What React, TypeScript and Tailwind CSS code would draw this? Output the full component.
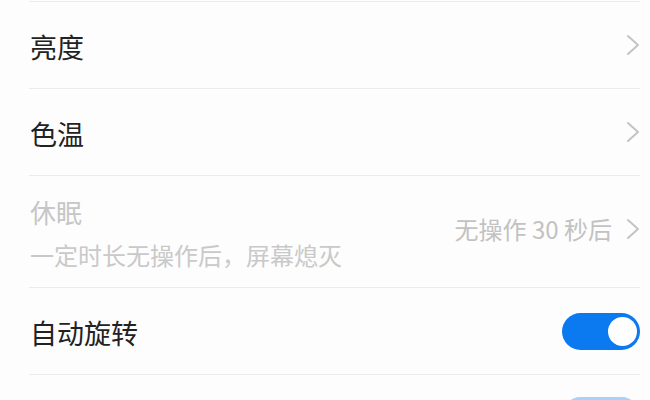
const FONT = { fontFamily: '"Noto Sans CJK SC", "Noto Sans", sans-serif' };

function Chevron() {
  return (
    <svg width="14" height="22" viewBox="0 0 14 22" fill="none" className="shrink-0">
      <polyline points="2,2 12,11 2,20" stroke="#c4c4c4" strokeWidth="2" strokeLinecap="round" strokeLinejoin="round" />
    </svg>
  );
}

function Toggle({ light }: { light?: boolean }) {
  return (
    <div className={`relative w-[78px] h-[37px] rounded-full shrink-0 ${light ? 'bg-[#a9d2fb]' : 'bg-[#0b7af1]'}`}>
      <div className="absolute right-[3px] top-[4px] w-[29px] h-[29px] rounded-full bg-white" />
    </div>
  );
}

function NavRow({ label }: { label: string }) {
  return (
    <div className="h-[87px] ml-[29px] mr-[10px] pl-px flex items-center justify-between border-b border-[#ebebeb]">
      <span className="text-[27px] leading-none text-[#222222] mt-[3px]">{label}</span>
      <Chevron />
    </div>
  );
}

export default function App() {
  return (
    <div className="w-[650px] h-[400px] overflow-hidden bg-[#fdfdfd]" style={FONT}>
      <div className="h-px mt-px ml-[29px] mr-[10px] bg-[#ebebeb]" />
      <NavRow label="亮度" />
      <NavRow label="色温" />

      <div className="h-[112px] ml-[29px] mr-[10px] pl-px flex items-center justify-between border-b border-[#ebebeb]">
        <div className="flex flex-col">
          <span className="text-[26px] leading-none text-[#c6c6c6] mt-[2px]">休眠</span>
          <span className="text-[24px] leading-none text-[#c9c9c9] mt-[18px]">一定时长无操作后，屏幕熄灭</span>
        </div>
        <div className="flex items-center gap-[14px] mb-[6px]">
          <span className="text-[24px] leading-none text-[#c2c2c2]">无操作 30 秒后</span>
          <Chevron />
        </div>
      </div>

      <div className="h-[87px] ml-[29px] mr-[10px] pl-px flex items-center justify-between border-b border-[#ebebeb]">
        <span className="text-[27px] leading-none text-[#222222] mt-[2px]">自动旋转</span>
        <Toggle />
      </div>

      <div className="h-[87px] ml-[29px] mr-[10px] pl-px flex items-start justify-end pt-[22px]">
        <Toggle light />
      </div>
    </div>
  );
}
